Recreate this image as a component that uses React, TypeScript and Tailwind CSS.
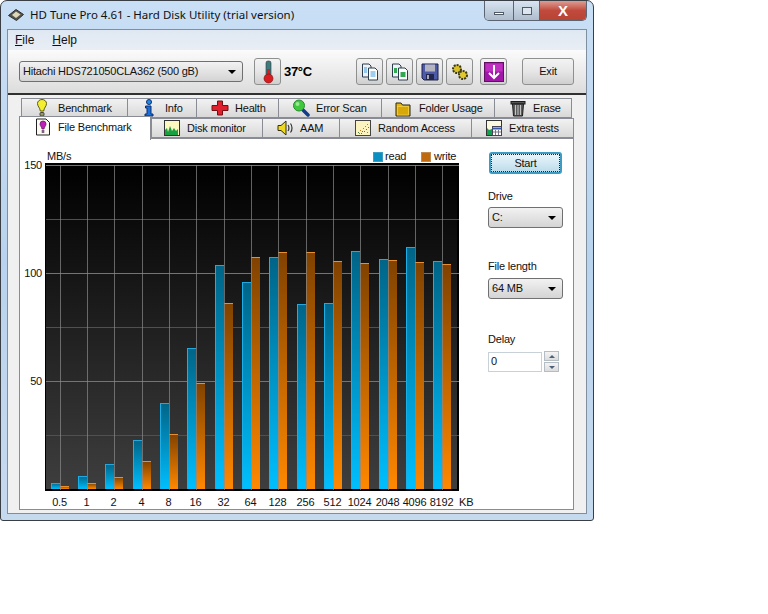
const sizes = ["0.5", "1", "2", "4", "8", "16", "32", "64", "128", "256", "512", "1024", "2048", "4096", "8192"];
const gridX = [60, 87, 114, 142, 169, 196, 224, 251, 278, 306, 333, 360, 388, 415, 442];
const readTop = [483, 476, 464, 440, 403, 348, 265, 282, 257, 304, 303, 251, 259, 247, 261];
const writeTop = [486, 483, 477, 461, 434, 383, 303, 257, 252, 252, 261, 263, 260, 262, 264];

function DiskLogo() {
  return (
    <svg width="16" height="16" viewBox="0 0 16 16">
      <path d="M0.500 8.500 8 2.500l7.500 5-7 6z" fill="#55554f" stroke="#2d2d2d" />
      <path d="M4 8l4-3.500L12.500 7.500 8 11z" fill="#e0d6b8" />
    </svg>
  );
}

function Bulb() {
  return (
    <svg width="12" height="18" viewBox="0 0 12 18">
      <path d="M1.500 4.500a4.500 4 0 0 1 9 0c0 3-2.500 4-2.800 7.500H4.300C4 8.500 1.500 7.500 1.500 4.500z" fill="#f4ee30" stroke="#5c5a10" />
      <rect x="4" y="13.500" width="4" height="3.500" rx="1" fill="#9a9a60" stroke="#44443a" />
    </svg>
  );
}

function InfoIcon() {
  return (
    <svg width="12" height="18" viewBox="0 0 12 18">
      <circle cx="6" cy="3" r="2.500" fill="#2488e8" stroke="#0c2f70" />
      <path d="M2.500 7H8v8h2v2H2v-2h2V9H2.500z" fill="#1a6fd8" stroke="#0c2f70" />
    </svg>
  );
}

function Cross() {
  return (
    <svg width="18" height="16" viewBox="0 0 18 16">
      <path d="M6.500 1h5v4.500H17v5h-5.500V15h-5v-4.500H1v-5h5.500z" fill="#e0202c" stroke="#701015" />
    </svg>
  );
}

function Magnifier() {
  return (
    <svg width="18" height="18" viewBox="0 0 18 18">
      <path d="M10 10l6 6" stroke="#123c88" strokeWidth="3.500" strokeLinecap="round" />
      <circle cx="7" cy="6.500" r="5.500" fill="#3fc83c" stroke="#2a8a30" />
      <circle cx="5.500" cy="5" r="2" fill="#98ea90" />
    </svg>
  );
}

function Folder() {
  return (
    <svg width="16" height="17" viewBox="0 0 16 17">
      <path d="M1 3h5l1.500 2H15v11H1z" fill="#e8b810" stroke="#282410" />
      <rect x="2.500" y="6.500" width="11" height="8.500" fill="#d8a808" stroke="#f4da60" strokeWidth="0.6" />
    </svg>
  );
}

function Trash() {
  return (
    <svg width="16" height="18" viewBox="0 0 16 18">
      <rect x="1" y="2.500" width="14" height="2.500" fill="#555" stroke="#1c1c1c" />
      <path d="M2.500 5h11l-1 12h-9z" fill="#5c5c5c" stroke="#1c1c1c" />
      <path d="M5.500 6v10M8 6v10M10.500 6v10" stroke="#c4c4c4" />
    </svg>
  );
}

function FileMark() {
  return (
    <svg width="16" height="18" viewBox="0 0 16 18">
      <path d="M1.500 1H11l3.500 3.500v12.500h-13z" fill="#fbfbf2" stroke="#222" />
      <path d="M5 6a3 3 0 0 1 6 0c0 2-1.500 2.500-2 5H7C6.500 8.500 5 8 5 6z" fill="#c020b8" stroke="#5c1060" strokeWidth="0.7" />
      <rect x="6.700" y="12" width="2.600" height="3" fill="#806080" />
    </svg>
  );
}

function ChartIcon() {
  return (
    <svg width="16" height="16" viewBox="0 0 16 16">
      <rect x="0.500" y="0.500" width="15" height="15" fill="#fbf8c0" stroke="#333" />
      <path d="M1 15V10l2-2 1 4 2-6 2 5 2-3 2 3 2-2v6z" fill="#18a040" />
    </svg>
  );
}

function Speaker() {
  return (
    <svg width="17" height="16" viewBox="0 0 17 16">
      <path d="M1 5.500h3L9 1v14l-5-4.500H1z" fill="#f0d820" stroke="#34300c" />
      <path d="M11 5c1.200 1.500 1.200 4.500 0 6M13.500 3.500c2 2.500 2 6.500 0 9" fill="none" stroke="#333" strokeWidth="1.200" />
    </svg>
  );
}

function Scatter() {
  const dots = [[3, 12], [5, 10], [6, 13], [8, 8], [9, 11], [10, 6], [11, 9], [12, 4], [13, 7], [12, 12], [7, 11], [4, 13]];
  return (
    <svg width="16" height="16" viewBox="0 0 16 16">
      <rect x="0.500" y="0.500" width="15" height="15" fill="#fbf4c0" stroke="#444" />
      {dots.map(([x, y], i) => (
        <rect key={i} x={x} y={y} width="1" height="1" fill={i % 2 ? "#c08020" : "#508040"} />
      ))}
    </svg>
  );
}

function ExtraIcon() {
  return (
    <svg width="16" height="16" viewBox="0 0 16 16">
      <rect x="0.500" y="0.500" width="15" height="15" fill="#fbf8e0" stroke="#333" />
      <path d="M1 15V8l2 2 3-1v6z" fill="#10a050" />
      <rect x="6.500" y="6.500" width="9" height="9" fill="#fff" stroke="#445" />
      <path d="M6.500 8.500h9" stroke="#3858a8" strokeWidth="2" />
      <path d="M9.500 10v5M12.500 10v5M7 12h8" stroke="#778" />
    </svg>
  );
}

function Thermometer() {
  return (
    <svg width="14" height="24" viewBox="0 0 14 24">
      <rect x="5" y="1" width="5" height="15" rx="2" fill="#3c7c80" stroke="#333" strokeWidth="0.6" />
      <rect x="6" y="9" width="3" height="8" fill="#d81c20" />
      <circle cx="7.500" cy="18.500" r="4.500" fill="#d81c20" stroke="#701010" strokeWidth="0.6" />
    </svg>
  );
}

function CopyDocs({ green }: { green?: boolean }) {
  const fill = green ? "#30a850" : "#3c9ce0";
  return (
    <svg width="18" height="18" viewBox="0 0 18 18">
      <path d="M1.500 1H8l2 2v11H1.500z" fill="#eef2f6" stroke="#2c3c4c" />
      <path d="M7.500 5H14l2.500 2.500V17h-9z" fill="#fff" stroke="#2c3c4c" />
      {green ? (
        <rect x="9.500" y="9" width="5" height="5" fill={fill} />
      ) : (
        <path d="M9.500 9h5M9.500 11h5M9.500 13h5" stroke={fill} />
      )}
      {green ? <rect x="3" y="5" width="3" height="5" fill={fill} /> : <path d="M3 5h3M3 7h3M3 9h3" stroke={fill} />}
    </svg>
  );
}

function Floppy() {
  return (
    <svg width="18" height="18" viewBox="0 0 18 18">
      <path d="M1 1h16v16H3l-2-2z" fill="#4c5aa8" stroke="#1c2048" />
      <rect x="4" y="1.500" width="10" height="7" fill="#b4b4c0" />
      <rect x="5" y="11" width="8" height="6" fill="#20264c" />
      <rect x="6" y="12" width="2" height="4" fill="#a8a8b8" />
    </svg>
  );
}

function Gears() {
  return (
    <svg width="20" height="18" viewBox="0 0 20 18">
      <circle cx="7" cy="6" r="4" fill="#d8c028" stroke="#3c3810" strokeWidth="2" strokeDasharray="2 1" />
      <circle cx="13" cy="12" r="4" fill="#e0c830" stroke="#3c3810" strokeWidth="2" strokeDasharray="2 1" />
    </svg>
  );
}

function DownBox() {
  return (
    <svg width="20" height="20" viewBox="0 0 20 20">
      <rect x="0.500" y="0.500" width="19" height="19" fill="#a018a8" stroke="#601060" />
      <rect x="1.500" y="1.500" width="17" height="8" fill="#c030c0" />
      <path d="M10 3v13M5 11l5 5 5-5" fill="none" stroke="#fff" strokeWidth="2" />
    </svg>
  );
}

function Arrow() {
  return <div className="h-0 w-0 border-x-[4px] border-t-[4px] border-x-transparent border-t-black" />;
}

function Select({ value, width }: { value: string; width: string }) {
  return (
    <div className={`flex h-[21px] items-center justify-between rounded-[3px] border border-[#707070] bg-gradient-to-b from-[#f2f2f2] to-[#d4d4d4] pl-[3px] pr-[6px] ${width}`}>
      <span>{value}</span>
      <Arrow />
    </div>
  );
}

function ToolButton({ children, width = "w-[27px]" }: { children: React.ReactNode; width?: string }) {
  return (
    <div className={`flex h-[27px] items-center justify-center rounded-[3px] border border-[#8e8f8f] bg-gradient-to-b from-[#f3f3f3] via-[#e6e6e6] to-[#cfcfcf] ${width}`}>
      {children}
    </div>
  );
}

function Tab({ label, icon, width, pl, gap = "gap-[6px]" }: { label: string; icon: React.ReactNode; width: string; pl: string; gap?: string }) {
  return (
    <div className={`flex h-[20px] items-center border border-l-0 border-[#898c95] bg-gradient-to-b from-[#f2f2f2] to-[#d8d8d8] first:border-l ${gap} ${width} ${pl}`}>
      <span className="flex h-[20px] w-[18px] items-center justify-center">{icon}</span>
      <span>{label}</span>
    </div>
  );
}

function BenchChart() {
  return (
    <svg width="460" height="370" viewBox="20 139 460 370" className="block">
      <defs>
        <linearGradient id="plot" x1="0" y1="0" x2="0" y2="1">
          <stop offset="0" stopColor="#000000" />
          <stop offset="1" stopColor="#3e3e3e" />
        </linearGradient>
        <linearGradient id="readBar" x1="0" y1="0" x2="0" y2="1">
          <stop offset="0" stopColor="#006487" />
          <stop offset="1" stopColor="#00bfff" />
        </linearGradient>
        <linearGradient id="writeBar" x1="0" y1="0" x2="0" y2="1">
          <stop offset="0" stopColor="#804200" />
          <stop offset="1" stopColor="#ff8800" />
        </linearGradient>
      </defs>

      <rect x="45" y="163" width="414" height="328" fill="#000" />
      <rect x="46" y="164" width="411" height="325" fill="url(#plot)" />

      {[219, 327, 435].map((y) => (
        <line key={y} x1="46" x2="459" y1={y + 0.5} y2={y + 0.5} stroke="#505050" />
      ))}
      {[165, 273, 381].map((y) => (
        <line key={y} x1="46" x2="459" y1={y + 0.5} y2={y + 0.5} stroke="#747474" />
      ))}

      {gridX.map((x, i) => (
        <g key={x}>
          <rect x={x - 9} y={readTop[i]} width="9" height={489 - readTop[i]} fill="url(#readBar)" />
          <rect x={x - 9} y={readTop[i]} width="9" height="1" fill="#20a8e0" />
          <rect x={x - 9} y={readTop[i]} width="1" height={489 - readTop[i]} fill="#18b0e8" />
          <rect x={x} y={writeTop[i]} width="9" height={489 - writeTop[i]} fill="url(#writeBar)" />
          <rect x={x} y={writeTop[i]} width="9" height="1" fill="#e89030" />
          <line x1={x + 0.5} x2={x + 0.5} y1="165" y2="490" stroke="#8a8a8a" strokeOpacity="0.7" />
        </g>
      ))}

      <g fontSize="11" fill="#111" fontFamily="'Liberation Sans', sans-serif">
        <text x="47" y="160">MB/s</text>
        <text x="42" y="169" textAnchor="end">150</text>
        <text x="42" y="277" textAnchor="end">100</text>
        <text x="42" y="385" textAnchor="end">50</text>
        {sizes.map((s, i) => (
          <text key={s} x={gridX[i] - 0.5} y="506" textAnchor="middle">{s}</text>
        ))}
        <text x="459" y="506">KB</text>
        <rect x="373.500" y="152.500" width="9" height="9" fill="#0a8fc0" stroke="#3c9cc4" />
        <text x="385" y="160">read</text>
        <rect x="421.500" y="152.500" width="9" height="9" fill="#c06a10" stroke="#c08a50" />
        <text x="434" y="160">write</text>
      </g>
    </svg>
  );
}

export default function App() {
  return (
    <div className="h-[614px] w-[768px] overflow-hidden bg-white text-[11px] tracking-[-0.2px] text-[#111] [font-family:'Liberation_Sans',sans-serif]">
      <div className="flex h-[521px] w-[594px] flex-col rounded-t-[7px] rounded-b-[3px] border border-[#3a3f46] bg-gradient-to-b from-[#c9dff5] via-[#b9d3ee] to-[#c6daee] px-[6px] pb-[6px]">
        {/* Title bar */}
        <div className="flex h-[28px] shrink-0 items-start">
          <div className="flex h-[27px] items-center gap-[6px] pl-[1px]">
            <DiskLogo />
            <span className="text-[11.500px] tracking-normal [font-family:'Noto_Sans',sans-serif]">HD Tune Pro 4.61 - Hard Disk Utility (trial version)</span>
          </div>
          <div className="ml-auto flex h-[20px] w-[103px] overflow-hidden rounded-b-[5px] border border-t-0 border-[#5a6472]">
            <div className="flex w-[29px] items-end justify-center border-r border-[#5a6472] bg-gradient-to-b from-[#d8e4f0] to-[#aebccc] pb-[5px]">
              <div className="h-[3px] w-[10px] border border-[#505a66] bg-white" />
            </div>
            <div className="flex w-[26px] items-center justify-center border-r border-[#5a6472] bg-gradient-to-b from-[#d8e4f0] to-[#aebccc]">
              <div className="h-[8px] w-[10px] border border-[#505a66] bg-[#dde6ee]" />
            </div>
            <div className="flex flex-1 items-center justify-center bg-gradient-to-b from-[#dc9c94] via-[#c04a3c] to-[#b84434] text-[15px] font-bold leading-none text-white">
              X
            </div>
          </div>
        </div>

        {/* Client area */}
        <div className="flex flex-1 flex-col border border-[#7f8fa0] bg-[#f0f0f0]">
          <div className="flex h-[20px] shrink-0 items-center gap-[18px] bg-gradient-to-b from-[#dfe8f2] to-[#e9eef5] pl-[7px] text-[12px] tracking-normal">
            <span><u>F</u>ile</span>
            <span><u>H</u>elp</span>
          </div>
          <div className="flex h-[45px] shrink-0 items-center border-b-2 border-[#303030] bg-gradient-to-b from-[#fbfbfb] to-[#dcdcdc] pl-[11px]">
            <Select value="Hitachi HDS721050CLA362 (500 gB)" width="w-[224px] pl-[3px]" />
            <div className="ml-[11px]">
              <ToolButton><Thermometer /></ToolButton>
            </div>
            <span className="ml-[3px] w-[72px] text-[13px] font-bold tracking-[-0.3px] text-black">37°C</span>
            <div className="flex gap-[3px]">
              <ToolButton><CopyDocs /></ToolButton>
              <ToolButton><CopyDocs green /></ToolButton>
              <ToolButton><Floppy /></ToolButton>
              <ToolButton><Gears /></ToolButton>
            </div>
            <div className="ml-[7px]">
              <ToolButton><DownBox /></ToolButton>
            </div>
            <div className="ml-[15px]">
              <ToolButton width="w-[52px]">Exit</ToolButton>
            </div>
          </div>

          {/* Tabs */}
          <div className="ml-[13px] mt-[3px] flex">
            <Tab label="Benchmark" icon={<Bulb />} width="w-[107px]" pl="pl-[11px]" gap="gap-[7px]" />
            <Tab label="Info" icon={<InfoIcon />} width="w-[69px]" pl="pl-[12px]" gap="gap-[7px]" />
            <Tab label="Health" icon={<Cross />} width="w-[82px]" pl="pl-[14px]" />
            <Tab label="Error Scan" icon={<Magnifier />} width="w-[103px]" pl="pl-[13px]" />
            <Tab label="Folder Usage" icon={<Folder />} width="w-[113px]" pl="pl-[12px]" gap="gap-[7px]" />
            <Tab label="Erase" icon={<Trash />} width="w-[77px]" pl="pl-[14px]" />
          </div>
          <div className="relative ml-[11px] flex h-[20px] items-end">
            <div className="absolute bottom-[-2px] left-0 z-10 flex h-[24px] w-[132px] items-center gap-[7px] border border-b-0 border-[#898c95] bg-white pb-[3px] pl-[15px]">
              <FileMark />
              <span>File Benchmark</span>
            </div>
            <div className="ml-[132px] flex">
              <Tab label="Disk monitor" icon={<ChartIcon />} width="w-[112px]" pl="pl-[11px]" />
              <Tab label="AAM" icon={<Speaker />} width="w-[77px]" pl="pl-[13px]" />
              <Tab label="Random Access" icon={<Scatter />} width="w-[132px]" pl="pl-[14px]" />
              <Tab label="Extra tests" icon={<ExtraIcon />} width="w-[102px]" pl="pl-[13px]" />
            </div>
          </div>

          {/* Panel */}
          <div className="ml-[11px] flex h-[372px] w-[555px] border border-[#898c95] bg-white">
            <BenchChart />
            <div className="ml-[8px] flex w-[76px] flex-col pt-[13px]">
              <div className="ml-[1px] flex h-[22px] w-[73px] items-center justify-center rounded-[3px] border-2 border-[#3d9cc4] bg-gradient-to-b from-[#eaf6fb] to-[#bcdcea] outline-1 -outline-offset-3 outline-dotted outline-[#222]">
                Start
              </div>
              <span className="mt-[14px] h-[19px]">Drive</span>
              <Select value="C:" width="w-[75px]" />
              <span className="mt-[30px] h-[20px]">File length</span>
              <Select value="64 MB" width="w-[75px]" />
              <span className="mt-[32px] h-[20px]">Delay</span>
              <div className="flex items-center gap-[1px]">
                <div className="flex h-[20px] w-[54px] items-center border border-[#c8d0d8] bg-white pl-[2px]">0</div>
                <div className="ml-[1px] flex w-[15px] flex-col gap-[1px]">
                  <div className="flex h-[10px] items-center justify-center border border-[#b4bcc4] bg-gradient-to-b from-[#f4f4f4] to-[#dcdcdc]">
                    <div className="h-0 w-0 border-x-[3px] border-b-[3px] border-x-transparent border-b-[#4c607c]" />
                  </div>
                  <div className="flex h-[10px] items-center justify-center border border-[#b4bcc4] bg-gradient-to-b from-[#f4f4f4] to-[#dcdcdc]">
                    <div className="h-0 w-0 border-x-[3px] border-t-[3px] border-x-transparent border-t-[#4c607c]" />
                  </div>
                </div>
              </div>
            </div>
          </div>
        </div>
      </div>
    </div>
  );
}
